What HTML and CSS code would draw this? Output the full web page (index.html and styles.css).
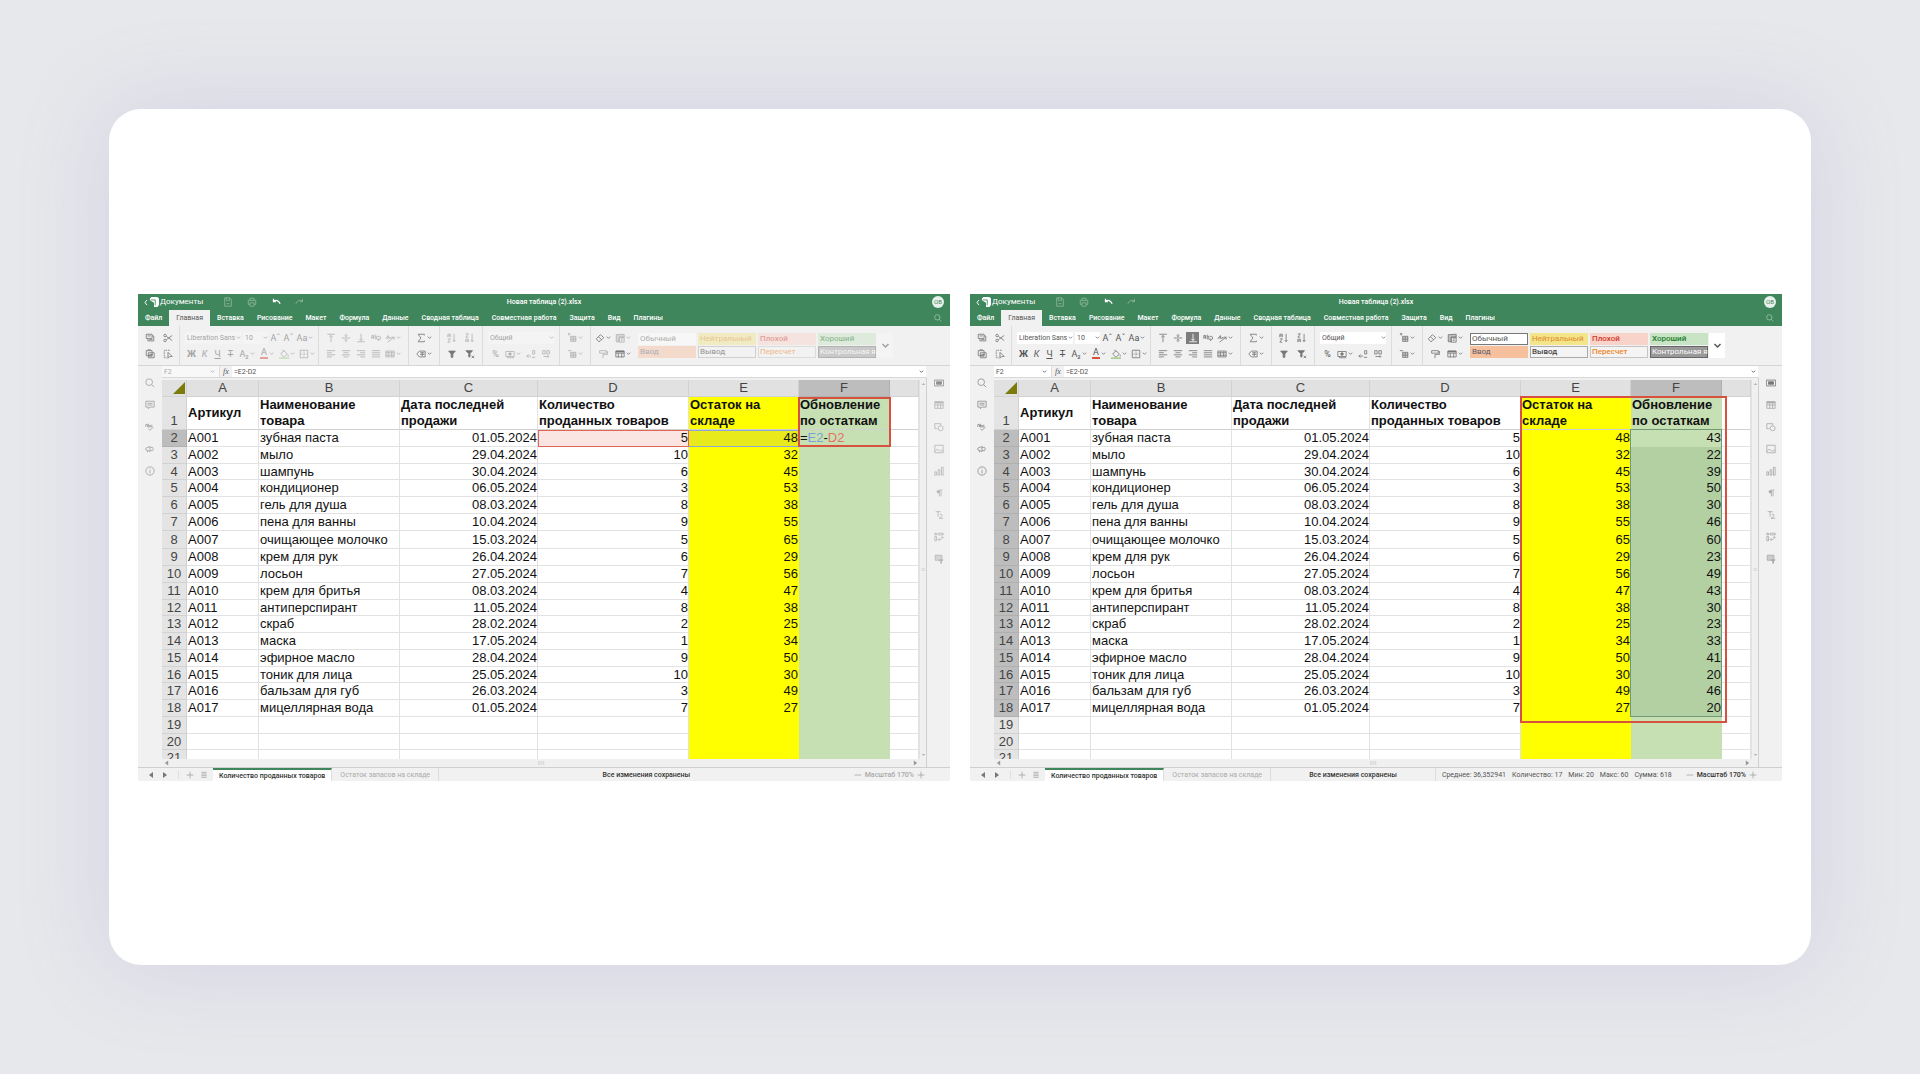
FILE: index.html
```html
<!DOCTYPE html>
<html lang="ru">
<head>
<meta charset="utf-8">
<meta name="viewport" content="width=device-width, initial-scale=1">
<title>Новая таблица (2).xlsx</title>
<link rel="stylesheet" href="styles.css">
</head>
<body>
<main class="card" id="card"></main>
<script src="app.js"></script>
</body>
</html>
```
FILE: styles.css
```css
* { box-sizing: border-box; }
body {
  margin: 0;
  min-height: 100vh;
  padding: 109px;
  display: flex;
  background: #e6e8eb;
  font-family: "Liberation Sans", Arial, sans-serif;
  color: #555;
}
button, select, input { font: inherit; color: inherit; margin: 0; padding: 0; border: 0; background: none; }
button { display: flex; align-items: center; justify-content: center; white-space: nowrap; }
a { color: inherit; text-decoration: none; }
svg { display: block; flex: none; fill: none; stroke: currentColor; stroke-width: 1; }
.icon { width: 10px; height: 10px; }
.caret { width: 5px; height: 5px; }

.card {
  flex: 1;
  display: grid;
  grid-template-columns: 1fr 1fr;
  gap: 20px;
  align-items: center;
  padding: 1px 29px 0;
  border-radius: 32px;
  background: #fff;
  box-shadow: 0 0 90px rgba(155, 140, 210, 0.24);
}
.editor { min-width: 0; background: #f1f1f1; font-family: Roboto, "Liberation Sans", sans-serif; font-size: 7px; line-height: 8px; }

/* Title bar and ribbon tabs */
.header { background: #40865c; color: #fff; height: 32px; }
.titlebar { display: grid; grid-template-columns: 1fr auto 1fr; align-items: center; height: 16px; padding: 0 6px; }
.titlebar-left { display: flex; align-items: center; }
.back { font-size: 8px; gap: 1px; width: 60px; justify-content: flex-start; }
.back .caret { width: 4px; height: 7px; }
.quick { display: flex; padding-left: 12px; }
.quick button { width: 24px; }
.quick .faded { opacity: 0.4; }
.filename { font-weight: 500; }
.avatar { justify-self: end; width: 12px; height: 12px; border-radius: 50%; background: #e8f0eb; color: #40865c; font-size: 6px; }
.tabs { display: flex; height: 16px; align-items: stretch; font-weight: 500; }
.tabs a { padding: 4px 6px 4px 7px; }
.tabs a.active { background: #f1f1f1; color: #555; font-weight: normal; padding: 4px 7px; }
.tabs a:first-child { padding-right: 7px; }
.tabs button { margin-left: auto; width: 24px; opacity: 0.6; }
.tabs .icon { width: 8px; height: 8px; }

/* Ribbon */
.ribbon { display: flex; height: 40px; border-bottom: 1px solid #d5d5d5; }
.group { display: flex; flex-direction: column; justify-content: center; padding: 0 5px; }
.group + .group { border-left: 1px solid #dcdcdc; }
.clipboard-group { padding: 0 2px 0 3px; }
.font-group { padding: 0 1px 0 5px; }
.align-group { padding: 0 5px 0 4px; }
.sort-group { padding: 0 3px; }
.clear-group { padding: 0 2px; }
.row { display: flex; align-items: center; height: 16px; }
.row button { width: 18px; height: 14px; gap: 1px; font-size: 9px; }
.row svg { color: #777; }
.row .narrow { width: 13px; }
.row .mid { width: 15px; }
.row .wide { width: 20px; }
.row .on { background: #7d7d7d; width: 13px; height: 12px; margin: 0 1px; }
.row .on svg { color: #fff; }
.row .underline { text-decoration: underline; }
.row .strike { text-decoration: line-through; }
.row b { border-bottom: 2px solid #d8503e; line-height: 9px; font-weight: normal; padding: 0 1px; }
.field { display: flex; align-items: center; height: 12px; margin-right: 2px; background: #fff; padding: 0 0 0 2px; }
.field select { appearance: none; flex: 1; min-width: 0; line-height: 10px; }
.font-name { width: 56px; }
.font-size { width: 25px; margin-right: 1px; }
.format { width: 66px; margin-right: 0; }
.gallery { display: flex; align-self: center; margin-left: 3px; }
.styles { display: grid; grid-template-columns: repeat(4, 58px); gap: 1px 2px; }
.styles button { height: 12px; padding: 0 1px; justify-content: flex-start; font-size: 8px; border: 1px solid transparent; }
.gallery .more { width: 16px; background: #fff; margin-left: 1px; }
.more .caret { width: 9px; height: 9px; }
.styles .s-normal { background: #fff; border-color: #777; }
.s-neutral { background: #f2e58a; color: #e08a28; }
.s-bad { background: #f8d3ca; color: #d23a2c; font-weight: 500; }
.s-good { background: #c8e4c4; color: #1d7a2c; font-weight: 500; }
.s-input { background: #f6c09c; color: #5c5c70; }
.styles .s-output { background: #f4f4f4; color: #444; font-weight: 500; border-color: #aaa; }
.styles .s-calc { background: #f4f4f4; color: #ee8427; font-weight: 500; border-color: #c4c4c4; }
.styles .s-check { background: #999; color: #fff; border-color: #666; }

/* Formula bar, rails and sheet area */
.workspace { display: grid; grid-template-columns: 24px minmax(0, 1fr) 24px; }
.rail { display: flex; flex-direction: column; align-items: center; }
.rail button { height: 22px; color: #8f8f8f; }
.rail-left { grid-row: 1 / 3; padding-top: 6px; }
.rail-right { border-left: 1px solid #cfcfcf; }
.rail-right button { color: #aaa; }
.rail-right button:first-child { height: 10px; margin-bottom: 6px; color: #777; }
.formula { grid-column: 2 / 4; display: flex; height: 12px; background: #fff; border-bottom: 1px solid #d8d8d8; margin-right: 24px; }
.cellname { display: flex; align-items: center; width: 58px; padding: 0 4px 0 2px; border-right: 1px solid #ddd; }
.cellname input { flex: 1; min-width: 0; }
.fx { width: 12px; background: #f1f1f1; font: italic 8px "Liberation Serif", serif; }
.formula-text { flex: 1; min-width: 0; padding-left: 2px; }
.formula .expand { width: 10px; }
.sheet-wrap { display: grid; grid-template-columns: minmax(0, 1fr) 7px; grid-template-rows: 379px 8px; padding-top: 2px; }
.viewport { overflow: hidden; background: #fff; }
.vscroll { display: flex; flex-direction: column; justify-content: space-between; align-items: center; background: #f0f0f0; color: #999; border-left: 1px solid #e2e2e2; }
.vscroll svg, .hscroll svg { width: 5px; height: 8px; }
.hscroll { grid-column: 1 / 3; display: flex; justify-content: space-between; align-items: center; background: #f0f0f0; color: #999; padding: 0 8px 0 2px; }
.grip { color: #ccc; }

.sheet { width: 100%; table-layout: fixed; border-collapse: separate; border-spacing: 0; font-family: "Liberation Sans", Arial, sans-serif; font-size: 13px; line-height: 16px; color: #111; }
.sheet th, .sheet td { padding: 0 1px; height: 17px; border-right: 1px solid #e2e2e2; border-bottom: 1px solid #e2e2e2; white-space: nowrap; text-align: left; font-weight: normal; }
.sheet tr:nth-child(4n) > * { height: 16px; line-height: 15px; }
.sheet tbody tr:nth-child(8) > * { height: 18px; line-height: 17px; vertical-align: bottom; }
.sheet tbody tr:first-child > * { height: 32px; line-height: 16px; border-bottom-color: #d0d0d0; padding-bottom: 0; }
.sheet tbody tr:first-child td { font-weight: bold; }
.sheet thead th { height: 17px; background: #e1e1e1; color: #444; text-align: center; border-color: #d2d2d2; }
.sheet tbody th { background: #e4e4e4; color: #444; text-align: center; border-color: #d2d2d2; }
.sheet tbody tr:first-child th { vertical-align: bottom; }
.sheet thead .picked, .sheet tbody .picked { background: #bdbdbd; border-color: #b0b0b0; }
.sheet .corner { padding: 1px; }
.corner svg { width: 12px; height: 12px; margin-left: auto; fill: #7d7a0c; stroke: none; }
.sheet td.num { text-align: right; padding-right: 0; }
.sheet .yellow { background: #ff0; border-color: #ff0; }
.sheet .green { background: #c6dfb3; border-color: #c6dfb3; }
.sheet td.chosen { background: #b3d0a3; border-color: #b3d0a3; }
.sheet td.marked { position: relative; }
.mark, .range { position: absolute; z-index: 2; pointer-events: none; }
.mark { border: 2px solid #d8503e; left: -1px; }
.mark-cell { top: 0; width: calc(100% + 3px); height: 50px; }
.mark-cols { top: -1px; width: calc(187% + 3px); height: 327px; }
.range { border: 1px solid #6f9a78; top: -1px; left: -1px; width: calc(100% + 2px); height: 288px; }
.sheet .ref-red { background: #fae5e3; border-color: #e0665a; box-shadow: inset 1px 1px #e0665a; }
.sheet .ref-blue { background: #e9ea1c; border-color: #8aa7d8; box-shadow: inset 0 1px #8aa7d8; }
.tok-blue { color: #7d9fd6; }
.tok-red { color: #e8706a; }

/* Status bar */
.status { display: flex; align-items: center; height: 14px; border-top: 1px solid #cfcfcf; white-space: nowrap; }
.sheet-nav { display: flex; width: 40px; padding-left: 6px; color: #777; }
.sheet-nav button { width: 14px; }
.sheet-nav svg { width: 6px; height: 6px; fill: currentColor; stroke: none; }
.sheet-add { display: flex; width: 35px; padding-left: 4px; border-left: 1px solid #ddd; color: #999; }
.sheet-add button { width: 14px; }
.sheet-add .icon, .zoom .icon { width: 8px; height: 8px; }
.sheet-tab { align-self: stretch; display: flex; align-items: center; padding: 0 8px; border-right: 1px solid #ddd; color: #aaa; }
.sheet-tab.active { background: #fff; border-top: 2px solid #40865c; color: #333; font-weight: 500; padding: 0 6px; }
.saved { flex: 1; text-align: center; font-weight: 500; color: #333; }
.totals { display: flex; gap: 6px; padding-left: 6px; align-items: center; height: 13px; border-left: 1px solid #ddd; margin-right: 14px; }
.zoom { display: flex; align-items: center; gap: 3px; padding-right: 25px; font-weight: 500; color: #333; }
.zoom svg { color: #999; }
.editing .zoom { color: #aaa; }

/* Controls that are unavailable while a cell is being edited */
.editing .ribbon button, .editing .ribbon .field { opacity: 0.5; }
.editing .ribbon .ready { opacity: 1; }
.editing .gallery .styles button { opacity: 0.45; }
.editing .gallery .styles .s-normal { border-color: transparent; }
.editing .ribbon .field, .editing .gallery .more { background: #f7f7f7; }
.editing .cellname { color: #aaa; background: #f8f8f8; }
.editing .rail button { opacity: 0.8; }
```
FILE: app.js
```js
const icons = {
  logo: '<path fill="#fff" stroke="none" d="M1 3.500Q1 0 4 0h5q3 0 3 3v5q0 4-4 4H6V7L1 4z"/><path stroke="#40865c" d="M2 3.500h5.500V10"/>',
  save: '<path d="M2 1h6l2 2v8H2zM4 1v3h4V1M4 8h4"/>',
  print: '<path d="M3.500 4V1.500h5V4M3 9H1.500V4h9v5H9M3.500 7h5v4h-5z"/>',
  undo: '<path stroke-width="1.500" d="M3 2v3.500h3M3 5q5-3 8 3"/>',
  redo: '<path d="M9 2v3.500H6M9 5Q4 2 1 8"/>',
  search: '<circle cx="5" cy="5" r="4"/><path d="M8 8l3 3"/>',
  copy: '<path d="M1.500 1.500h7v5h-7zM3.500 6.500v3h7v-6h-2M3 3.500h4M5 8h4"/>',
  paste: '<path d="M1.500 2h7v6h-7zM4 4.500h7v6H4zM5 6.500h4M5 8.500h4M3 1h4"/>',
  cut: '<circle cx="2.500" cy="3" r="1.500"/><circle cx="2.500" cy="9" r="1.500"/><path d="M4 4l7 5M4 8l7-5"/>',
  select: '<path d="M8 1.500H1.500v9H5" stroke-dasharray="2 1"/><path d="M6 4v7l2-2h3z"/>',
  bucket: '<path d="M2 6l4-4 4 4-4 4zM4 1l2 2M11 7v2"/><path stroke="#a9d08e" stroke-width="2" d="M0 11h12"/>',
  borders: '<path d="M1.500 1.500h9v9h-9z"/><path stroke-dasharray="1 1" d="M6 2v8M2 6h8"/>',
  top: '<path d="M1.500 1.500h9M6 11V3M4 5l2-2 2 2"/>',
  middle: '<path d="M1 6h10M6 1v3M6 11V8M4.500 3L6 4.500 7.500 3M4.500 9L6 7.500 7.500 9"/>',
  bottom: '<path d="M1.500 10.500h9M6 1v8M4 7l2 2 2-2"/>',
  wrap: '<path d="M1 7V3h2v4M1 5h2M5 2v5h2V4H5M8 4h2q1.500 0 1.500 2T10 8H8M9.500 6.500L8 8l1.500 1.500"/>',
  orient: '<path d="M1 7l3-4 1 4M2 6h3M6 7q0-3 2-1M3 11l8-6M11 8V5H8"/>',
  left: '<path d="M1 2h10M1 4.500h6M1 7h10M1 9.500h6"/>',
  center: '<path d="M1 2h10M3 4.500h6M1 7h10M3 9.500h6"/>',
  right: '<path d="M1 2h10M5 4.500h6M1 7h10M5 9.500h6"/>',
  justify: '<path d="M1 2h10M1 4.500h10M1 7h10M1 9.500h10"/>',
  merge: '<path d="M1 2.500h10v7H1zM1 4.500h10M1 7.500h10M4 3v6M8 3v6"/>',
  sum: '<path d="M10 3V1.500H2.500L6 6l-3.500 4.500H10V9"/>',
  named: '<path d="M4 2.500h7v7H4L1 6zM5 4.500h5M5 6.500h5M7.500 4v5"/>',
  sortAsc: '<path d="M1 5V1.500h3V5M1 3.500h3M1 7h3l-3 4h3M8.500 1v9M7 8.500l1.500 2 1.500-2"/>',
  sortDesc: '<path d="M1 1h3L1 5h3M1 11V7.500h3V11M1 9.500h3M8.500 1v9M7 8.500l1.500 2 1.500-2"/>',
  filter: '<path fill="currentColor" d="M2 2.500h8L7 6v4H5V6z"/>',
  clearFilter: '<path fill="currentColor" d="M1 2h8L6 5.500v4H4.500v-4z"/><path d="M8 8l3 3M11 8l-3 3"/>',
  money: '<path d="M1 3h10v6H1zM3 9v1.500h8"/><circle cx="6" cy="6" r="1.500" fill="currentColor"/>',
  decLess: '<path d="M1 8.500h5M3 6.500l-2 2 2 2M8 2h2.500v4H8zM7 10h4"/>',
  decMore: '<path d="M2 2h3v4H2zM7 2h3v4H7zM3 9h6M8 7.500L9.500 9 8 10.500"/>',
  insert: '<path d="M1 1h3M2.500 0v3M4 4h7M4 6h7M4 8h7M4 10h7M4.500 4v6M7.500 4v6M10.500 4v6"/>',
  remove: '<path d="M1 2h4M4 4h7M4 6h7M4 8h7M4 10h7M4.500 4v6M7.500 4v6M10.500 4v6"/>',
  eraser: '<path d="M1.500 7l5-5 4 3.500L6 10H4zM4 4.500L8 8"/>',
  cond: '<path fill="currentColor" fill-opacity=".4" d="M1.500 2v8.500H5V5h6V1.500z"/><path d="M5 5h6v6H5zM7 7h3M7 9h2"/>',
  brush: '<path d="M2 2h8v3H2zM10 3h1.500v3.500H6V11"/>',
  tableFmt: '<path d="M1 2.500h10v7H1zM1 5h10M4 5v5M8 5v5"/><path stroke-width="2" d="M1 3h10"/>',
  comment: '<path d="M1 1.500h10v7H6l-2 2v-2H1zM3 4h6M3 6h6"/>',
  spell: '<path d="M1 6V3h2v3M4 2v4h2V4H4M9 4H7v2h2M10 6l-4 4-2-2"/>',
  speak: '<path d="M1 5l5-2v6L1 7zM6 4h3q2 2 0 4H6M3 8v2"/>',
  info: '<circle cx="6" cy="6" r="5"/><path d="M6 5v4M6 3v1"/>',
  cell: '<path d="M.500 2.500h11v7H.500z"/><path fill="currentColor" d="M3 4.500h6v3H3z"/>',
  table: '<path d="M1 2h10v8H1zM1 6h10M4.500 4v6M8 4v6"/><path stroke-width="2" d="M1 3h10"/>',
  shape: '<path d="M4 8H1V2h7v2"/><circle cx="8" cy="7.500" r="3"/>',
  image: '<path d="M1 1.500h10v9H1zM1 9l3-3 3 3 2-2 2 2"/>',
  chart: '<path d="M1 7h2v4H1zM5 4.500h2V11H5zM9 1.500h2V11H9z"/>',
  para: '<path d="M6.500 3v7M8.500 3v7"/><path fill="currentColor" d="M6 3H4.500q-2 1.500 0 3H6zM6 2.500h4"/>',
  textArt: '<path d="M2 2h6M5 2v6M7 5q4 0 2 3l-3 2h5"/>',
  pivot: '<path d="M1 1.500h2v2H1zM5 1.500h6v2H5zM1 5.500h2v5H1zM5 9q5 1 5-3M8.500 7L10 5.500 11.500 7M6.500 7.500L5 9l1.500 1.500"/>',
  slicer: '<path fill="currentColor" fill-opacity=".5" d="M1.500 1.500h8v6h-8z"/><path fill="currentColor" d="M6 7h5L9 9v2H8V9z"/>',
  plus: '<path d="M6 1v10M1 6h10"/>',
  minus: '<path d="M1 6h10"/>',
  list: '<path d="M2 2h8M2 4.500h8M2 7h8M2 9.500h8"/>',
};
const icon = (name, cls = 'icon') => `<svg class="${cls}" viewBox="0 0 12 12" aria-hidden="true">${icons[name]}</svg>`;
const caret = '<svg class="caret" viewBox="0 0 6 6" aria-hidden="true"><path d="M1 2l2 2 2-2"/></svg>';
const arrow = (d) => `<svg viewBox="0 0 6 6" aria-hidden="true"><path fill="currentColor" stroke="none" d="${d}"/></svg>`;
const LEFT = 'M5 0v6L1 3z', RIGHT = 'M1 0v6l4-3z', UP = 'M1 4l2-2 2 2z', DOWN = 'M1 2l2 2 2-2z';

const btn = (content, cls = '', label = '') => `<button type="button" class="${cls}" aria-label="${label}">${icons[content] ? icon(content) : content}</button>`;
const drop = (content, cls = 'wide') => btn((icons[content] ? icon(content) : content) + caret, cls);
const field = (cls, label, value) => `<label class="field ${cls}"><select aria-label="${label}"><option>${value}</option></select>${caret}</label>`;
const group = (row1, row2, cls = '') => `<div class="group ${cls}"><div class="row">${row1}</div><div class="row">${row2}</div></div>`;

const tabs = ['Файл', 'Главная', 'Вставка', 'Рисование', 'Макет', 'Формула', 'Данные', 'Сводная таблица', 'Совместная работа', 'Защита', 'Вид', 'Плагины'];
const cellStyles = [['Обычный', 'normal'], ['Нейтральный', 'neutral'], ['Плохой', 'bad'], ['Хороший', 'good'],
  ['Ввод', 'input'], ['Вывод', 'output'], ['Пересчет', 'calc'], ['Контрольная я', 'check']];

const goods = [
  ['A001', 'зубная паста', '01.05.2024', 5, 48], ['A002', 'мыло', '29.04.2024', 10, 32],
  ['A003', 'шампунь', '30.04.2024', 6, 45], ['A004', 'кондиционер', '06.05.2024', 3, 53],
  ['A005', 'гель для душа', '08.03.2024', 8, 38], ['A006', 'пена для ванны', '10.04.2024', 9, 55],
  ['A007', 'очищающее молочко', '15.03.2024', 5, 65], ['A008', 'крем для рук', '26.04.2024', 6, 29],
  ['A009', 'лосьон', '27.05.2024', 7, 56], ['A010', 'крем для бритья', '08.03.2024', 4, 47],
  ['A011', 'антиперспирант', '11.05.2024', 8, 38], ['A012', 'скраб', '28.02.2024', 2, 25],
  ['A013', 'маска', '17.05.2024', 1, 34], ['A014', 'эфирное масло', '28.04.2024', 9, 50],
  ['A015', 'тоник для лица', '25.05.2024', 10, 30], ['A016', 'бальзам для губ', '26.03.2024', 3, 49],
  ['A017', 'мицеллярная вода', '01.05.2024', 7, 27],
];

function sheet(editing) {
  const lastPicked = editing ? 2 : 18;
  const columns = [25, 72, 141, 138, 151, 110, 91, 29].map((w) => `<col style="width:${w}px">`).join('');
  const letters = ['A', 'B', 'C', 'D', 'E', 'F', ''].map((l) => `<th scope="col" class="${l === 'F' ? 'picked' : ''}">${l}</th>`).join('');
  const mark = editing ? '' : '<span class="mark mark-cols"></span>';
  const cellMark = editing ? '<span class="mark mark-cell"></span>' : '';
  let body = `<tr><th scope="row">1</th><td>Артикул</td><td>Наименование<br>товара</td><td>Дата последней<br>продажи</td>
    <td>Количество<br>проданных товаров</td><td class="yellow marked">Остаток на<br>складе${mark}</td>
    <td class="green marked">Обновление<br>по остаткам${cellMark}</td><td></td></tr>`;
  for (let n = 2; n <= 21; n++) {
    const [code = '', name = '', date = '', sold = '', stock = ''] = goods[n - 2] || [];
    const first = n === 2;
    let rest = '';
    if (editing && first) rest = '=<span class="tok-blue">E2</span>-<span class="tok-red">D2</span>';
    if (!editing && code) rest = stock - sold;
    const range = !editing && first ? '<span class="range"></span>' : '';
    body += `<tr><th scope="row" class="${n <= lastPicked ? 'picked' : ''}">${n}</th><td>${code}</td><td>${name}</td>
      <td class="num">${date}</td><td class="num ${editing && first ? 'ref-red' : ''}">${sold}</td>
      <td class="num yellow ${editing && first ? 'ref-blue' : ''}">${stock}</td>
      <td class="green ${editing ? '' : 'num'} ${!editing && code && !first ? 'chosen' : ''} ${range ? 'marked' : ''}">${rest}${range}</td><td></td></tr>`;
  }
  return `<table class="sheet"><colgroup>${columns}</colgroup>
    <thead><tr><th class="corner"><svg viewBox="0 0 12 12" aria-hidden="true"><path d="M12 0v12H0z"/></svg></th>${letters}</tr></thead><tbody>${body}</tbody></table>`;
}

function editor(editing) {
  const totals = editing ? '' : `<div class="totals"><span>Среднее: 36,352941</span><span>Количество: 17</span><span>Мин: 20</span><span>Макс: 60</span><span>Сумма: 618</span></div>`;
  return `<section class="editor ${editing ? 'editing' : ''}">
  <header class="header">
    <div class="titlebar">
      <div class="titlebar-left">
        <button type="button" class="back"><svg class="caret" viewBox="0 0 4 7" aria-hidden="true"><path d="M3 1L1 3.500 3 6"/></svg>${icon('logo')}Документы</button>
        <div class="quick">${btn('save', 'faded', 'Сохранить')}${btn('print', 'faded', 'Печать')}${btn('undo', '', 'Отменить')}${btn('redo', 'faded', 'Повторить')}</div>
      </div>
      <div class="filename">Новая таблица (2).xlsx</div>
      <button type="button" class="avatar">ОВ</button>
    </div>
    <nav class="tabs">${tabs.map((t, i) => `<a href="#" class="${i === 1 ? 'active' : ''}">${t}</a>`).join('')}${btn('search', '', 'Поиск')}</nav>
  </header>
  <div class="ribbon">
    ${group(btn('copy', 'ready') + btn('cut', 'ready'), btn('paste', 'ready') + btn('select', 'ready'), 'clipboard-group')}
    ${group(field('font-name', 'Шрифт', 'Liberation Sans') + field('font-size', 'Размер', '10') + btn('Aˆ', 'narrow') + btn('Aˇ', 'narrow') + drop('Aa'),
      btn('<strong>Ж</strong>', 'narrow') + btn('<em>К</em>', 'narrow') + btn('Ч', 'narrow underline') + btn('Т', 'narrow strike') + drop('A₂') + drop('<b>A</b>') + drop('bucket') + drop('borders'), 'font-group')}
    ${group(btn('top', 'mid') + btn('middle', 'mid') + btn('bottom', editing ? 'mid' : 'on') + btn('wrap', 'mid') + drop('orient'),
      btn('left', 'mid') + btn('center', 'mid') + btn('right', 'mid') + btn('justify', 'mid') + drop('merge'), 'align-group')}
    ${group(drop('sum', 'wide ready'), drop('named', 'wide ready'))}
    ${group(btn('sortAsc') + btn('sortDesc'), btn('filter', 'ready') + btn('clearFilter', 'ready'), 'sort-group')}
    ${group(field('format', 'Формат', 'Общий'), btn('%', 'mid') + drop('money') + btn('decLess', 'mid') + btn('decMore', 'mid'))}
    ${group(drop('insert'), drop('remove'))}
    ${group(drop('eraser', 'wide ready') + drop('cond'), btn('brush', 'wide') + drop('tableFmt', 'wide ready'), 'clear-group')}
    <div class="gallery"><div class="styles">${cellStyles.map(([t, c]) => `<button type="button" class="s-${c}">${t}</button>`).join('')}</div>${btn(caret, 'more', 'Ещё')}</div>
  </div>
  <div class="workspace">
    <aside class="rail rail-left">${['search', 'comment', 'spell', 'speak', 'info'].map((i) => btn(i)).join('')}</aside>
    <div class="formula">
      <label class="cellname"><input value="F2" aria-label="Ячейка">${caret}</label>
      <button type="button" class="fx">fx</button>
      <input class="formula-text" value="=E2-D2" aria-label="Формула">
      ${btn(caret, 'expand')}
    </div>
    <div class="sheet-wrap">
      <div class="viewport">${sheet(editing)}</div>
      <div class="vscroll">${arrow(UP)}<span class="grip">≡</span>${arrow(DOWN)}</div>
      <div class="hscroll">${arrow(LEFT)}<span class="grip">ıııı</span>${arrow(RIGHT)}</div>
    </div>
    <aside class="rail rail-right">${['cell', 'table', 'shape', 'image', 'chart', 'para', 'textArt', 'pivot', 'slicer'].map((i) => btn(i)).join('')}</aside>
  </div>
  <footer class="status">
    <div class="sheet-nav"><button type="button">${arrow(LEFT)}</button><button type="button">${arrow(RIGHT)}</button></div>
    <div class="sheet-add">${btn('plus')}${btn('list')}</div>
    <a href="#" class="sheet-tab active">Количество проданных товаров</a>
    <a href="#" class="sheet-tab">Остаток запасов на складе</a>
    <div class="saved">Все изменения сохранены</div>
    ${totals}
    <div class="zoom">${btn('minus')}<span>Масштаб 170%</span>${btn('plus')}</div>
  </footer>
</section>`;
}

document.getElementById('card').innerHTML = editor(true) + editor(false);
```
